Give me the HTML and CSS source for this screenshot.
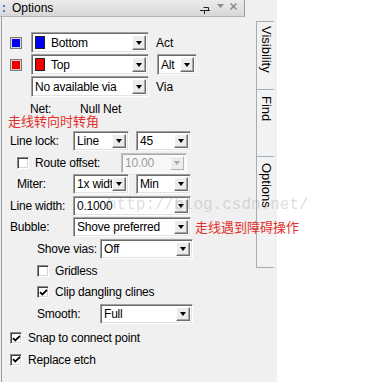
FILE: index.html
```html
<!DOCTYPE html>
<html lang="en">
<head>
    <meta charset="UTF-8">
    <title>Options</title>
    <link rel="stylesheet" href="styles.css">
</head>
<body>
    <div class="app">
        <div class="panel">
            <div class="titlebar">
                <span class="grip"></span>
                <span class="title">Options</span>
                <span class="tb-icons">
                    <svg class="pin" width="10" height="8" viewBox="0 0 10 8">
                        <path d="M0 4.5h10M4.5 4.5v3.5M3.5 1.5h5v3" fill="none" stroke="#222" stroke-width="1"/>
                    </svg>
                    <svg class="menu" width="7" height="4" viewBox="0 0 7 4"><path d="M0 0h7L3.5 4z" fill="#8a8a8a"/></svg>
                    <svg class="close" width="7" height="7" viewBox="0 0 7 7"><path d="M0.5 0.5l6 6M6.5 0.5l-6 6" stroke="#8a8a8a" stroke-width="1.5"/></svg>
                </span>
            </div>

            <div class="panel-body">
                <div class="layer-row">
                    <span class="swatch blue"><i></i></span>
                    <div class="combo w118">
                        <span class="val"><i class="chip blue"></i>Bottom</span>
                        <span class="drop"></span>
                    </div>
                    <span class="side">Act</span>
                </div>
                <div class="layer-row">
                    <span class="swatch red"><i></i></span>
                    <div class="combo w118">
                        <span class="val"><i class="chip red"></i>Top</span>
                        <span class="drop"></span>
                    </div>
                    <div class="combo w40 alt">
                        <span class="val">Alt</span>
                        <span class="drop"></span>
                    </div>
                </div>
                <div class="layer-row">
                    <span class="swatch empty"></span>
                    <div class="combo w118">
                        <span class="val">No available via</span>
                        <span class="drop"></span>
                    </div>
                    <span class="side">Via</span>
                </div>

                <div class="net-row">
                    <span class="net-label">Net:</span>
                    <span>Null Net</span>
                </div>
                <div class="note first-note">走线转向时转角</div>

                <div class="form">
                    <div class="row">
                        <span class="lbl l63">Line lock:</span>
                        <div class="combo w56"><span class="val">Line</span><span class="drop"></span></div>
                        <div class="combo w55 gap7"><span class="val">45</span><span class="drop"></span></div>
                    </div>
                    <div class="row indent7">
                        <span class="check"></span>
                        <span class="lbl l86">Route offset:</span>
                        <div class="combo w66 disabled"><span class="val">10.00</span><span class="drop"></span></div>
                    </div>
                    <div class="row indent7">
                        <span class="lbl l56">Miter:</span>
                        <div class="combo w56"><span class="val">1x width</span><span class="drop"></span></div>
                        <div class="combo w55 gap7"><span class="val">Min</span><span class="drop"></span></div>
                    </div>
                    <div class="row">
                        <span class="lbl l63">Line width:</span>
                        <div class="combo w118"><span class="val">0.1000</span><span class="drop"></span></div>
                    </div>
                    <div class="row">
                        <span class="lbl l63">Bubble:</span>
                        <div class="combo w118"><span class="val">Shove preferred</span><span class="drop"></span></div>
                        <span class="note side-note">走线遇到障碍操作</span>
                    </div>
                    <div class="row indent27">
                        <span class="lbl l63">Shove vias:</span>
                        <div class="combo w93"><span class="val">Off</span><span class="drop"></span></div>
                    </div>
                    <div class="row indent27">
                        <span class="check"></span>
                        <span class="lbl">Gridless</span>
                    </div>
                    <div class="row indent27">
                        <span class="check on">
                            <svg width="9" height="9" viewBox="0 0 9 9"><path d="M1 4.2l2.3 2.3L8 1.8" fill="none" stroke="#000" stroke-width="1.8"/></svg>
                        </span>
                        <span class="lbl">Clip dangling clines</span>
                    </div>
                    <div class="row indent27">
                        <span class="lbl l63">Smooth:</span>
                        <div class="combo w93"><span class="val">Full</span><span class="drop"></span></div>
                    </div>
                    <div class="row snap">
                        <span class="check on">
                            <svg width="9" height="9" viewBox="0 0 9 9"><path d="M1 4.2l2.3 2.3L8 1.8" fill="none" stroke="#000" stroke-width="1.8"/></svg>
                        </span>
                        <span class="lbl">Snap to connect point</span>
                    </div>
                    <div class="row">
                        <span class="check on">
                            <svg width="9" height="9" viewBox="0 0 9 9"><path d="M1 4.2l2.3 2.3L8 1.8" fill="none" stroke="#000" stroke-width="1.8"/></svg>
                        </span>
                        <span class="lbl">Replace etch</span>
                    </div>
                </div>
            </div>
        </div>

        <div class="tabs">
            <div class="tab t-vis">Visibility</div>
            <div class="tab t-find">Find</div>
            <div class="tab t-opt">Options</div>
        </div>

        <div class="watermark">http://blog.csdn.net/</div>
    </div>
</body>
</html>
```

FILE: styles.css
```css
html, body {
    margin: 0;
    padding: 0;
    background: #fff;
}

body {
    font-family: "Liberation Sans", Arial, sans-serif;
    font-size: 11px;
    color: #000;
}

.app {
    position: relative;
    display: flex;
    width: 277px;
    height: 382px;
    background: #f0f0f0;
}

.panel {
    width: 256px;
    display: flex;
    flex-direction: column;
    position: relative;
    z-index: 1;
}

/* title bar */
.titlebar {
    width: 244px;
    height: 16px;
    display: flex;
    align-items: center;
    background: linear-gradient(#ececec, #d7d7d7);
    border-bottom: 1px solid #b4b4b4;
    border-right: 1px solid #9a9a9a;
}

.grip {
    width: 2px;
    height: 7px;
    margin-left: 3px;
    background: linear-gradient(#3c7fd6 0, #3c7fd6 2px, transparent 2px, transparent 5px, #3c7fd6 5px);
}

.title {
    margin-left: 7px;
    font-size: 12px;
    flex: 1;
}

.tb-icons {
    display: flex;
    align-items: center;
    margin-right: 7px;
}

.pin {
    margin-right: 7px;
    margin-top: 3px;
}

.menu {
    margin-right: 6px;
    margin-top: -4px;
}

.close {
    margin-top: -3px;
}

/* body */
.panel-body {
    flex: 1;
    margin-left: 1px;
    border-left: 1px solid #9a9a9a;
    padding: 15px 0 0 8px;
}

.layer-row {
    display: flex;
    align-items: center;
    height: 21px;
    margin-bottom: 1px;
}

.swatch {
    width: 12px;
    height: 12px;
    box-sizing: border-box;
    border: 1px solid #7c7c7c;
    padding: 1px;
    margin-right: 9px;
    background: #d9d9e6;
}

.swatch i {
    display: block;
    width: 100%;
    height: 100%;
}

.swatch.blue i { background: #0000f0; }
.swatch.red { background: #e6c8c8; }
.swatch.red i { background: #f00000; }
.swatch.empty { border: none; background: none; }

.side {
    margin-left: 7px;
    font-size: 12px;
}

.alt {
    margin-left: 8px;
}

/* combo box */
.combo {
    display: flex;
    height: 20px;
    box-sizing: border-box;
    flex-shrink: 0;
    background: #fff;
    border: 1px solid;
    border-color: #a0a0a0 #fdfdfd #fdfdfd #a0a0a0;
    box-shadow: inset 1px 1px 0 #6b6b6b, inset -1px -1px 0 #e2e2e2;
    padding: 2px;
}

.layer-row .combo {
    height: 21px;
}

.combo .val {
    flex: 1;
    display: flex;
    align-items: center;
    padding-left: 1px;
    white-space: nowrap;
    overflow: hidden;
    font-size: 12px;
    letter-spacing: -0.2px;
}

.chip {
    width: 10px;
    height: 13px;
    box-sizing: border-box;
    border: 1px solid #222;
    margin-right: 6px;
    flex-shrink: 0;
}

.chip.blue { background: #0000f0; }
.chip.red { background: #f00000; }

.drop {
    width: 14px;
    flex-shrink: 0;
    box-sizing: border-box;
    background: #ececec;
    border: 1px solid;
    border-color: #fff #6b6b6b #6b6b6b #fff;
    box-shadow: inset -1px -1px 0 #a8a8a8;
    display: flex;
    align-items: center;
    justify-content: center;
}

.drop::after {
    content: "";
    border-left: 3.5px solid transparent;
    border-right: 3.5px solid transparent;
    border-top: 4px solid #000;
}

.combo.disabled {
    background: #f7f7f7;
    border-color: #c4c4c4 #fdfdfd #fdfdfd #c4c4c4;
    box-shadow: inset 1px 1px 0 #a8a8a8;
}

.combo.disabled .val { color: #9a9a9a; }
.combo.disabled .drop { border-color: #fff #b4b4b4 #b4b4b4 #fff; box-shadow: none; }
.combo.disabled .drop::after { border-top-color: #a8a8a8; }

.w40 { width: 40px; }
.w55 { width: 55px; }
.w56 { width: 56px; }
.w66 { width: 66px; }
.w93 { width: 93px; }
.w118 { width: 118px; }
.gap7 { margin-left: 7px; }

/* net + notes */
.net-row {
    display: flex;
    height: 14px;
    line-height: 14px;
    margin-top: 5px;
    padding-left: 20px;
    font-size: 12px;
    letter-spacing: -0.2px;
}

.net-label {
    width: 50px;
}

.note {
    color: #e0302c;
    font-family: "Noto Sans CJK SC", sans-serif;
    font-size: 13px;
    line-height: 16px;
    white-space: nowrap;
}

.first-note {
    margin-top: -3px;
    margin-left: -2px;
}

.side-note {
    margin-left: 4px;
    flex-shrink: 0;
}

/* form rows */
.form {
    display: flex;
    flex-direction: column;
    gap: 1.6px;
    margin-top: 2px;
}

.row {
    display: flex;
    align-items: center;
    height: 20px;
}

.row .lbl {
    font-size: 12px;
    letter-spacing: -0.2px;
    white-space: nowrap;
    flex-shrink: 0;
}

.l56 { width: 56px; }
.l63 { width: 63px; }
.l86 { width: 86px; }

.indent7 { padding-left: 7px; }
.indent27 { padding-left: 27px; }
.snap { margin-top: 3px; }

.check {
    width: 12px;
    height: 12px;
    box-sizing: border-box;
    flex-shrink: 0;
    background: #fff;
    border: 1px solid;
    border-color: #8a8a8a #fff #fff #8a8a8a;
    box-shadow: inset 1px 1px 0 #404040, inset -1px -1px 0 #d8d8d8;
    margin-right: 6px;
    display: flex;
    align-items: center;
    justify-content: center;
}

/* side tabs */
.tabs {
    width: 21px;
    padding-top: 22px;
}

.tab {
    width: 18px;
    box-sizing: border-box;
    border: 1px solid #a3adb8;
    border-right: none;
    background: #f2f2f2;
    writing-mode: vertical-rl;
    font-size: 13px;
    line-height: 16px;
    padding-top: 4px;
    margin-top: -1px;
}

.t-vis { height: 69px; }
.t-find { height: 68px; padding-top: 6px; }
.t-opt { height: 112px; padding-top: 6px; }

.watermark {
    position: absolute;
    left: 107px;
    top: 197px;
    z-index: 2;
    font-family: "Liberation Mono", monospace;
    font-size: 16px;
    line-height: 16px;
    color: rgba(140, 140, 140, 0.3);
    white-space: nowrap;
    pointer-events: none;
}
```
